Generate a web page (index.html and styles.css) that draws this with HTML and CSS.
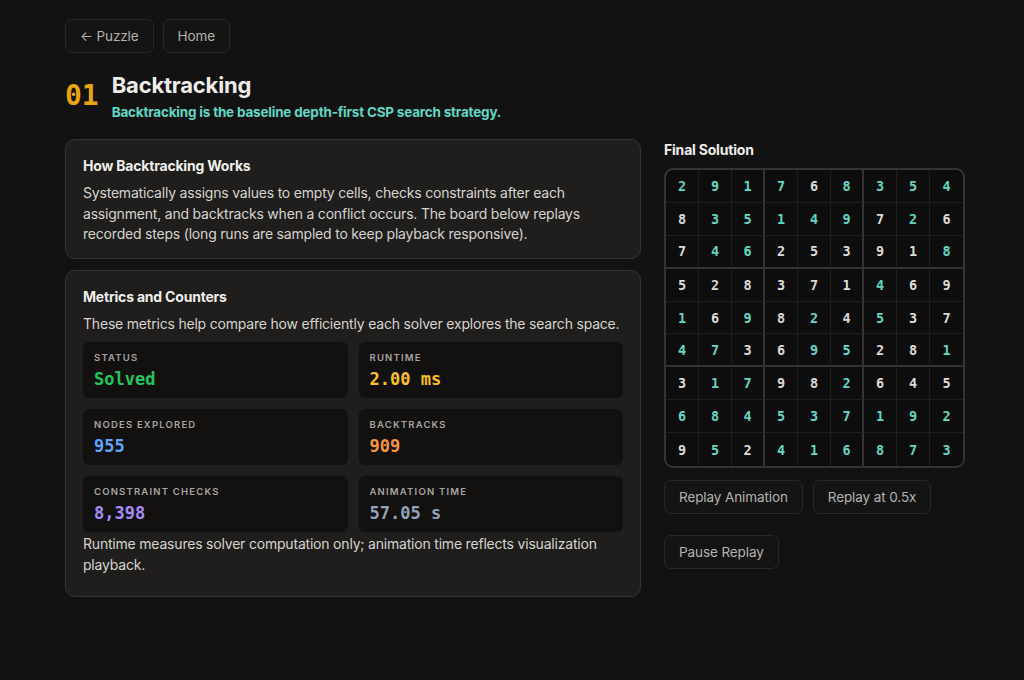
FILE: index.html
```html
<!DOCTYPE html>
<html lang="en">
<head>
  <meta charset="UTF-8">
  <title>Backtracking - Sudoku Solver</title>
  <link rel="stylesheet" href="styles.css">
</head>
<body>
  <div class="pagina">
    <nav class="topo">
      <a class="btn" href="#">&larr; Puzzle</a>
      <a class="btn" href="#">Home</a>
    </nav>

    <header class="cabecalho">
      <span class="numero">01</span>
      <div>
        <h1>Backtracking</h1>
        <p class="subtitulo">Backtracking is the baseline depth-first CSP search strategy.</p>
      </div>
    </header>

    <div class="colunas">
      <div class="esquerda">
        <section class="cartao">
          <h3>How Backtracking Works</h3>
          <p>Systematically assigns values to empty cells, checks constraints after each assignment, and backtracks when a conflict occurs. The board below replays recorded steps (long runs are sampled to keep playback responsive).</p>
        </section>

        <section class="cartao">
          <h3>Metrics and Counters</h3>
          <p>These metrics help compare how efficiently each solver explores the search space.</p>
          <div class="metricas">
            <div class="metrica"><span class="rotulo">Status</span><span class="valor verde">Solved</span></div>
            <div class="metrica"><span class="rotulo">Runtime</span><span class="valor amarelo">2.00 ms</span></div>
            <div class="metrica"><span class="rotulo">Nodes Explored</span><span class="valor azul">955</span></div>
            <div class="metrica"><span class="rotulo">Backtracks</span><span class="valor laranja">909</span></div>
            <div class="metrica"><span class="rotulo">Constraint Checks</span><span class="valor roxo">8,398</span></div>
            <div class="metrica"><span class="rotulo">Animation Time</span><span class="valor cinza">57.05 s</span></div>
          </div>
          <p class="nota">Runtime measures solver computation only; animation time reflects visualization playback.</p>
        </section>
      </div>

      <aside class="direita">
        <h3>Final Solution</h3>
        <div class="tabuleiro">
          <div class="c t">2</div><div class="c t">9</div><div class="c t bx">1</div><div class="c t">7</div><div class="c">6</div><div class="c t bx">8</div><div class="c t">3</div><div class="c t">5</div><div class="c t">4</div>
          <div class="c">8</div><div class="c t">3</div><div class="c t bx">5</div><div class="c t">1</div><div class="c t">4</div><div class="c t bx">9</div><div class="c">7</div><div class="c t">2</div><div class="c">6</div>
          <div class="c by">7</div><div class="c t by">4</div><div class="c t bx by">6</div><div class="c by">2</div><div class="c by">5</div><div class="c bx by">3</div><div class="c by">9</div><div class="c by">1</div><div class="c t by">8</div>
          <div class="c">5</div><div class="c">2</div><div class="c bx">8</div><div class="c">3</div><div class="c">7</div><div class="c bx">1</div><div class="c t">4</div><div class="c">6</div><div class="c">9</div>
          <div class="c t">1</div><div class="c">6</div><div class="c t bx">9</div><div class="c">8</div><div class="c t">2</div><div class="c bx">4</div><div class="c t">5</div><div class="c">3</div><div class="c">7</div>
          <div class="c t by">4</div><div class="c t by">7</div><div class="c bx by">3</div><div class="c by">6</div><div class="c t by">9</div><div class="c t bx by">5</div><div class="c by">2</div><div class="c by">8</div><div class="c t by">1</div>
          <div class="c">3</div><div class="c t">1</div><div class="c t bx">7</div><div class="c">9</div><div class="c">8</div><div class="c t bx">2</div><div class="c">6</div><div class="c">4</div><div class="c">5</div>
          <div class="c t">6</div><div class="c t">8</div><div class="c t bx">4</div><div class="c t">5</div><div class="c t">3</div><div class="c t bx">7</div><div class="c t">1</div><div class="c t">9</div><div class="c t">2</div>
          <div class="c ul">9</div><div class="c t ul">5</div><div class="c bx ul">2</div><div class="c t ul">4</div><div class="c t ul">1</div><div class="c t bx ul">6</div><div class="c t ul">8</div><div class="c t ul">7</div><div class="c t ul">3</div>
        </div>
        <div class="acoes">
          <button class="btn">Replay Animation</button>
          <button class="btn">Replay at 0.5x</button>
          <button class="btn">Pause Replay</button>
        </div>
      </aside>
    </div>
  </div>
</body>
</html>
```

FILE: styles.css
```css
body {
  font-family: 'Inter', 'Noto Sans', sans-serif;
  letter-spacing: -0.2px;
  margin: 0;
  background-color: #121212;
  color: #e7e5e4;
}

.pagina {
  padding: 19px 0 0 65px;
  width: 900px;
}

.topo {
  display: flex;
  gap: 9px;
}

.btn {
  display: inline-flex;
  align-items: center;
  height: 34px;
  box-sizing: border-box;
  padding: 0 14px;
  background-color: #151414;
  border: 1px solid #2a2827;
  border-radius: 7px;
  color: #b5b2ae;
  font-family: inherit;
  font-size: 13.5px;
  letter-spacing: -0.1px;
  text-decoration: none;
  cursor: pointer;
}

.cabecalho {
  display: flex;
  gap: 13px;
  margin-top: 17px;
}

.numero {
  font-family: 'DejaVu Sans Mono', monospace;
  font-weight: bold;
  font-size: 28px;
  letter-spacing: 0;
  color: #e6a50f;
  margin-top: 9px;
}

h1 {
  margin: 0;
  font-size: 22px;
  line-height: 30px;
  color: #efedea;
}

.subtitulo {
  margin: 4px 0 0;
  font-size: 13.5px;
  font-weight: bold;
  color: #5fd7c2;
}

.colunas {
  display: flex;
  gap: 23px;
  margin-top: 19px;
}

.esquerda {
  width: 576px;
  display: flex;
  flex-direction: column;
  gap: 11px;
}

.cartao {
  background-color: #1f1e1c;
  border: 1px solid #35332f;
  border-radius: 10px;
  padding: 16px 17px 13px;
}

.cartao h3 {
  margin: 0 0 7px;
  font-size: 14px;
  line-height: 20px;
  color: #f0eeeb;
}

.cartao p {
  margin: 0;
  font-size: 14px;
  line-height: 20.5px;
  color: #d6d3cf;
}

.metricas {
  display: grid;
  grid-template-columns: 1fr 1fr;
  gap: 11px;
  margin-top: 8px;
}

.metrica {
  background-color: #121110;
  border-radius: 6px;
  height: 56px;
  box-sizing: border-box;
  padding: 9px 11px;
  display: flex;
  flex-direction: column;
}

.rotulo {
  font-size: 9.5px;
  font-weight: 600;
  letter-spacing: 1.2px;
  text-transform: uppercase;
  color: #a8a4a0;
  line-height: 14px;
}

.valor {
  font-family: 'DejaVu Sans Mono', monospace;
  font-weight: bold;
  font-size: 17px;
  letter-spacing: 0;
  line-height: 24px;
  margin-top: 2px;
}

.verde { color: #22c55e; }
.amarelo { color: #fbbf24; }
.azul { color: #60a5fa; }
.laranja { color: #fb923c; }
.roxo { color: #a78bfa; }
.cinza { color: #94a3b8; }

.cartao p.nota {
  margin: 2px 0 8px;
}

.direita {
  width: 301px;
}

.direita h3 {
  margin: 1px 0 8px;
  font-size: 14px;
  line-height: 20px;
  color: #f0eeeb;
}

.tabuleiro {
  display: grid;
  grid-template-columns: repeat(9, 1fr);
  border: 2px solid #353432;
  border-radius: 9px;
  overflow: hidden;
  background-color: #0d0d0d;
  width: 301px;
  box-sizing: border-box;
}

.c {
  height: 32.9px;
  box-sizing: border-box;
  display: flex;
  align-items: center;
  justify-content: center;
  border-right: 1px solid #1e1e1d;
  border-bottom: 1px solid #1e1e1d;
  font-family: 'DejaVu Sans Mono', monospace;
  font-weight: bold;
  font-size: 13.5px;
  letter-spacing: 0;
  color: #dedad5;
}

.c:nth-child(9n) {
  border-right: none;
}

.c.t { color: #5fd7c2; }
.c.bx { border-right: 2px solid #353432; }
.c.by { border-bottom: 2px solid #353432; }
.c.ul { border-bottom: none; }

.acoes {
  display: flex;
  flex-wrap: wrap;
  gap: 21px 10px;
  margin-top: 12px;
}
```
